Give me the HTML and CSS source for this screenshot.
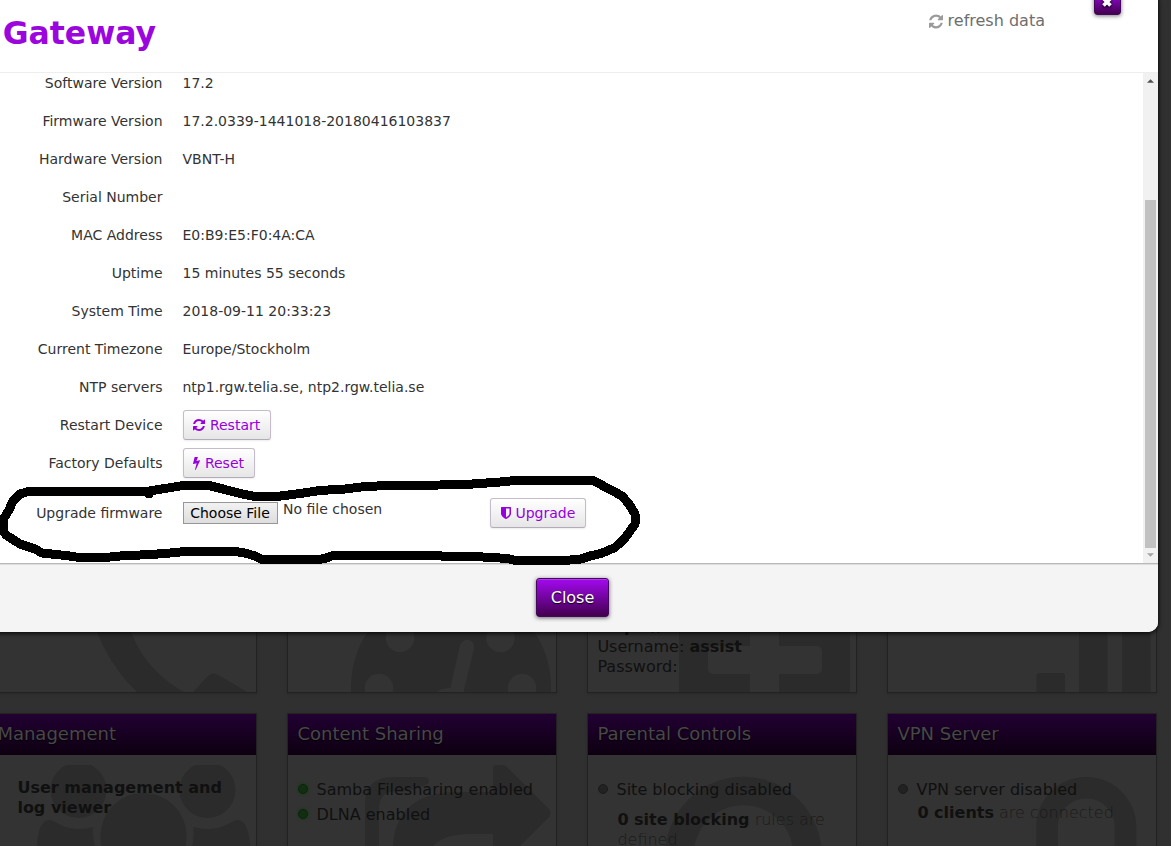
FILE: index.html
```html
<!DOCTYPE html>
<html lang="en">
<head>
<meta charset="utf-8">
<title>Gateway</title>
<link rel="stylesheet" href="styles.css">
</head>
<body>
<svg class="defs" aria-hidden="true">
  <symbol id="refresh" viewBox="0 0 1536 1792"><path d="M1511 1056q0 5-1 7-64 268-268 434.5t-478 166.5q-146 0-282.5-55t-243.500-157l-129 129q-19 19-45 19t-45-19-19-45v-448q0-26 19-45t45-19h448q26 0 45 19t19 45-19 45l-137 137q71 66 161 102t187 36q134 0 250-65t186-179q11-17 53-117 8-23 30-23h192q13 0 22.500 9.500t9.500 22.500zM1536 256v448q0 26-19 45t-45 19h-448q-26 0-45-19t-19-45 19-45l138-138q-148-137-349-137-134 0-250 65t-186 179q-11 17-53 117-8 23-30 23h-199q-13 0-22.500-9.500t-9.500-22.500v-7q65-268 270-434.500t480-166.500q146 0 284 55.500t245 156.500l130-129q19-19 45-19t45 19 19 45z"/></symbol>
  <symbol id="bolt" viewBox="0 0 896 1792"><path d="M885 566q18 20 7 44l-540 1157q-13 25-42 25-4 0-14-2-17-5-25.500-19t-4.500-30l197-808-406 101q-4 1-12 1-18 0-31-11-18-15-13-39l201-825q4-14 16-23t28-9h328q19 0 32 12.500t13 29.500q0 8-5 18l-171 463 396-98q8-2 12-2 19 0 34 15z"/></symbol>
  <symbol id="shield" viewBox="0 0 1280 1792"><path d="M1088 960v-640h-448v1137q119-63 213-137 235-184 235-360zm192-768v768q0 86-33.500 170.500t-83 150-118 127.500-126.500 103-121 77.500-89.500 49.500-42.500 20q-12 6-26 6t-26-6q-16-7-42.500-20t-89.500-49.500-121-77.500-126.500-103-118-127.500-83-150-33.500-170.500v-768q0-26 19-45t45-19h1152q26 0 45 19t19 45z"/></symbol>
</svg>

<main class="cards">
  <section class="card upper">
    <svg class="mark" viewBox="0 0 268 100"><path d="M106 33C117 61 130 82 149 100H196C168 84 149 61 141 33ZM205 100L218 86Q225 78 232 84L259 100Z"/></svg>
  </section>
  <section class="card upper">
    <svg class="mark" viewBox="0 0 268 100"><circle cx="163" cy="95" r="100"/><g class="hole"><circle cx="112" cy="46" r="14.300"/><circle cx="212.500" cy="46" r="14.300"/><circle cx="91" cy="96" r="14.300"/><circle cx="234" cy="96" r="14.300"/><circle cx="161" cy="117" r="21"/><path d="M172 53Q175 47 181 48Q187 50 186 57L175 102H161Z"/></g></svg>
  </section>
  <section class="card upper">
    <svg class="mark" viewBox="0 0 268 100"><path d="M91 0H262V100H91Z"/><g class="hole"><path d="M162 0h29v100h-29z"/><rect x="120" y="54" width="114" height="28" rx="5"/></g></svg>
    <p class="account"><b>https://</b><br>Username: <b>assist</b><br>Password:</p>
  </section>
  <section class="card upper">
    <svg class="mark" viewBox="0 0 268 100"><path d="M148.500 100V84q0-3 3-3h22.500q3 0 3 3v16zM191 0h28.500v100H191zM234 0h28.500v100H234z"/></svg>
  </section>

  <section class="card lower">
    <h3 class="card-title">Management</h3>
    <svg class="mark" viewBox="0 0 268 92"><path d="M78 10H103A28 28 0 1 1 78 10ZM207 10H232A28 28 0 1 1 207 10Z"/><circle class="head" cx="155.500" cy="81" r="46"/><path d="M49 92C49 82 52 65 61 65C67 65 74 74 91 74Q99 74 105 72Q104 80 107 92ZM262 92C262 82 259 65 250 65C244 65 237 74 220 74Q212 74 205 72Q207 80 204 92Z"/></svg>
    <p class="lead">User management and<br>log viewer</p>
  </section>
  <section class="card lower">
    <h3 class="card-title">Content Sharing</h3>
    <svg class="mark" viewBox="0 0 268 92"><path d="M205 14Q205 10 209 10H214Q217 10 220 13L260 53Q265 58 260 63L231 92H205V79H183Q155 79 144 92H105C107 49 137 37 170 37H205ZM77 92V50Q77 22 105 22H135Q141 22 141 26Q141 29 137 30Q127 36 109 36Q91 36 91 54V92Z"/></svg>
    <ul class="status">
      <li><i class="dot on"></i>Samba Filesharing enabled</li>
      <li><i class="dot on"></i>DLNA enabled</li>
    </ul>
  </section>
  <section class="card lower">
    <h3 class="card-title">Parental Controls</h3>
    <svg class="mark" viewBox="0 0 268 92"><circle class="ring" cx="155.500" cy="100" r="64" stroke-width="28.500"/></svg>
    <ul class="status">
      <li><i class="dot"></i>Site blocking disabled</li>
    </ul>
    <p class="note spaced"><b>0 site blocking</b> rules are<br>defined</p>
  </section>
  <section class="card lower">
    <h3 class="card-title">VPN Server</h3>
    <svg class="mark" viewBox="0 0 268 92"><path class="ring" stroke-width="21.500" d="M159 100V72A39.250 39.250 0 0 1 237.500 72V100"/></svg>
    <ul class="status">
      <li><i class="dot"></i>VPN server disabled</li>
    </ul>
    <p class="note"><b>0 clients</b> are connected</p>
  </section>
</main>

<div class="modal">
  <header class="modal-head">
    <h2>Gateway</h2>
    <a class="refresh"><svg class="ico"><use href="#refresh"/></svg>refresh data</a>
    <button class="dismiss"><svg viewBox="0 0 12 12"><path d="M2.500 2.500L9.500 9.500M9.500 2.500L2.500 9.500"/></svg></button>
  </header>
  <div class="modal-body">
    <dl class="info">
      <div class="row"><dt>Software Version</dt><dd>17.2</dd></div>
      <div class="row"><dt>Firmware Version</dt><dd>17.2.0339-1441018-20180416103837</dd></div>
      <div class="row"><dt>Hardware Version</dt><dd>VBNT-H</dd></div>
      <div class="row"><dt>Serial Number</dt><dd></dd></div>
      <div class="row"><dt>MAC Address</dt><dd>E0:B9:E5:F0:4A:CA</dd></div>
      <div class="row"><dt>Uptime</dt><dd>15 minutes 55 seconds</dd></div>
      <div class="row"><dt>System Time</dt><dd>2018-09-11 20:33:23</dd></div>
      <div class="row"><dt>Current Timezone</dt><dd>Europe/Stockholm</dd></div>
      <div class="row"><dt>NTP servers</dt><dd>ntp1.rgw.telia.se, ntp2.rgw.telia.se</dd></div>
      <div class="row"><dt>Restart Device</dt><dd><button class="btn"><svg class="ico"><use href="#refresh"/></svg>Restart</button></dd></div>
      <div class="row"><dt>Factory Defaults</dt><dd><button class="btn"><svg class="ico bolt"><use href="#bolt"/></svg>Reset</button></dd></div>
      <div class="row upgrade"><dt>Upgrade firmware</dt><dd><div class="picker"><button class="file">Choose File</button><span class="chosen">No file chosen</span></div><button class="btn"><svg class="ico shield"><use href="#shield"/></svg>Upgrade</button></dd></div>
    </dl>
    <div class="scrollbar"><svg class="arrow up" viewBox="0 0 8 4"><path d="M0 4L4 0L8 4Z"/></svg><div class="thumb"></div><svg class="arrow" viewBox="0 0 8 4"><path d="M0 0L4 4L8 0Z"/></svg></div>
  </div>
  <footer class="modal-foot"><button class="close">Close</button></footer>
</div>

<svg class="scribble" viewBox="0 0 650 100"><path d="M149 20L165 17.500L186 14L207 14L225 18.500L240 22.500L255 25.500L277 25.500L300 22.500L320 19.500L345 18L365 15.500L390 14.500L440 14L465 13.500L480 12.500L500 11L515 9.500L593 9.500L612 19.500L622 25L629 33L635 43L635 53L630 60L625 67L615 76.500L601 82.500L590 85L581 88L565 89.500L515 89.500L508 87.500L483 86L443 85.500L440 84.500L333 84.500L325 87.500L318 88.500L262 88.500L255 85L245 82L235 80.500L185 80.500L165 82.500L150 83.500L120 85L110 86L76 86L66 84.500L42 82L35 78L20 73L6 64L3.500 60L3.500 48L9 39L13 30L20 23L28 20.500L149 20V23"/></svg>
</body>
</html>
```
FILE: styles.css
```css
* { box-sizing: border-box; }
html, body { margin: 0; height: 100%; }
body {
  position: relative;
  overflow: hidden;
  background: #303030;
  color: #333;
  font: 14px/20px "DejaVu Sans", sans-serif;
}
h2, h3, p, ul, dl, dd { margin: 0; padding: 0; }
button { font: inherit; margin: 0; padding: 0; }
.defs { position: absolute; width: 0; height: 0; }

.cards {
  display: grid;
  grid-template-columns: repeat(4, 270px);
  grid-template-rows: 180px 133px;
  gap: 20px 30px;
  height: 846px;
  margin-left: -13px;
  padding-top: 513px;
  overflow: hidden;
  font-size: 16px;
  color: #101010;
}
.card {
  position: relative;
  overflow: hidden;
  background: #333;
  border: 1px solid #222;
  box-shadow: 0 1px 2px #2a2a2a;
}
.card.lower { border-bottom: 0; }
.card-title {
  height: 41px;
  padding-left: 9.4px;
  background: linear-gradient(#220032, #0d0010);
  color: #484848;
  font-size: 18px;
  font-weight: 400;
  line-height: 40px;
  text-shadow: 0 1px 1px #000;
}
.mark {
  position: absolute;
  left: 0;
  top: 41px;
  width: 268px;
  height: 92px;
  fill: #2b2b2b;
}
.upper .mark { top: 78px; height: 100px; }
.hole { fill: #333; }
.head { stroke: #333; stroke-width: 6px; }
.ring { fill: none; stroke: #2b2b2b; }
.card p, .status { position: relative; }
.account { padding: 103px 0 0 9.4px; }
.lead { padding: 23px 0 0 29.4px; font-weight: 700; }
.status { padding: 22px 0 0 9.5px; list-style: none; }
.status li { display: flex; align-items: center; height: 25px; gap: 9px; }
.dot {
  width: 10px;
  height: 10px;
  border-radius: 50%;
  background: #222;
  border: 1px solid #1b1b1b;
  margin-bottom: 2px;
}
.dot.on { background: #132d13; border-color: #0b260b; box-shadow: 0 0 3px #064006; }
.card .note { padding: 1px 0 0 29.4px; font-weight: 200; color: #1a1a1a; }
.note b { font-weight: 700; color: #101010; }
.card .spaced { padding-top: 8px; }

.modal {
  position: absolute;
  left: -13px;
  top: -9px;
  width: 1171px;
  height: 641px;
  display: flex;
  flex-direction: column;
  border-radius: 10px;
  background: #fff;
  box-shadow: 0 1px 5px #000;
}
.modal-head {
  display: flex;
  height: 82px;
  padding-left: 15.7px;
  border-bottom: 1px solid #eee;
}
.modal-head h2 {
  width: 926.3px;
  padding-top: 22px;
  color: #9b06de;
  font-size: 31.5px;
  line-height: 40px;
}
.refresh {
  display: flex;
  width: 165px;
  padding-top: 20px;
  color: #6e6e6e;
  font-size: 16px;
}
.refresh .ico { width: 14px; height: 17px; margin: 2px 4.6px 0 0; fill: #9b9b9b; }
.dismiss {
  display: flex;
  justify-content: center;
  align-items: flex-end;
  width: 27px;
  height: 24px;
  padding-bottom: 6px;
  border: 1px solid #43075c;
  border-radius: 3px;
  background: linear-gradient(#9c08e6, #43004f);
  box-shadow: 0 1px 4px #777;
}
.dismiss svg {
  width: 12px;
  height: 12px;
  stroke: #fff;
  stroke-width: 3.6;
  filter: drop-shadow(0 1px 1px #000);
}
.modal-body { display: flex; height: 490px; overflow: hidden; }
.info { width: 1156px; height: 498px; margin-top: -9px; }
.row { display: flex; align-items: center; height: 38px; gap: 20px; }
.row dt { width: 175.5px; text-align: right; flex: none; }
.row dd { display: flex; align-items: center; }
.row.upgrade { height: 62px; }
.picker { display: flex; width: 307.5px; gap: 5.5px; align-items: center; }
.chosen { margin-bottom: 8px; }
.ico { flex: none; }
.btn {
  display: flex;
  align-items: center;
  gap: 4.6px;
  height: 30px;
  padding: 0 9.8px 1px;
  border: 1px solid #c5bccb;
  border-bottom-color: #b3aaba;
  border-radius: 3px;
  background: linear-gradient(#fff, #e6e6e6);
  box-shadow: 0 1px 2px rgba(0, 0, 0, .08);
  color: #9500dd;
  line-height: 20px;
}
.btn .ico { width: 12px; height: 14px; fill: #9500dd; }
.btn .bolt { width: 7px; height: 14px; }
.btn .shield { width: 10px; height: 14px; }
.file {
  width: 95px;
  height: 22px;
  border: 1px solid #979797;
  background: linear-gradient(#f2f2f2, #ddd);
  color: #000;
  line-height: 20px;
}
.scrollbar {
  display: flex;
  flex-direction: column;
  align-items: center;
  justify-content: space-between;
  width: 15px;
  padding: 6px 0;
  background: #f1f1f1;
}
.arrow { width: 7px; height: 4px; fill: #a3a3a3; }
.arrow.up { fill: #505050; }
.thumb { width: 11px; height: 348px; margin-top: 112px; background: #c1c1c1; }
.modal-foot {
  display: flex;
  justify-content: center;
  height: 69px;
  padding-top: 14px;
  border-top: 1px solid #b9b9b9;
  border-radius: 0 0 10px 10px;
  background: #f4f4f4;
  box-shadow: inset 0 1px #ddd;
}
.close {
  width: 73px;
  height: 39px;
  border: 1px solid #43075c;
  border-radius: 3px;
  background: linear-gradient(#a309ef, #43004f);
  box-shadow: inset 0 1px rgba(255, 255, 255, .2), 0 1px 4px #666;
  color: #fff;
  font-size: 16px;
  text-shadow: 0 1px 1px #000;
}
.scribble {
  position: absolute;
  left: 0;
  top: 471px;
  width: 650px;
  height: 100px;
  fill: none;
  stroke: #000;
  stroke-width: 9px;
  stroke-linejoin: round;
  stroke-linecap: round;
  shape-rendering: crispEdges;
}
```
